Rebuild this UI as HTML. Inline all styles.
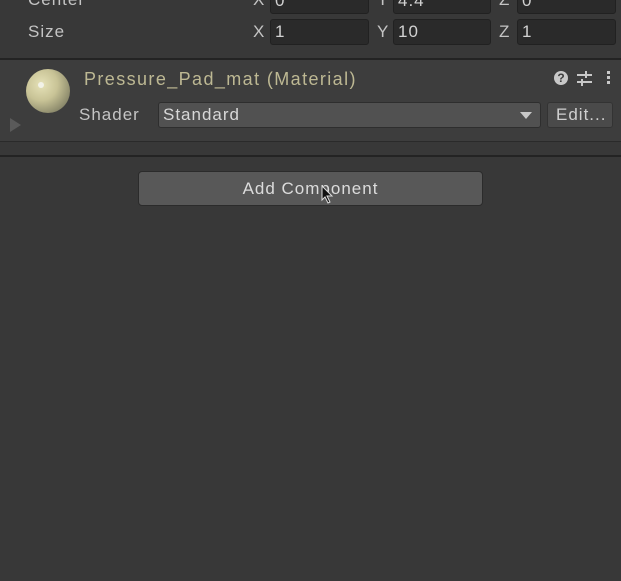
<!DOCTYPE html>
<html><head><style>
body{margin:0;width:621px;height:581px;background:#383838;overflow:hidden;position:relative;font-family:"Liberation Sans",sans-serif;color:#c4c4c4;font-size:17px;letter-spacing:1px}
.a{position:absolute}
.f{position:absolute;background:#2a2a2a;border:1px solid #212121;border-radius:3px;box-sizing:border-box;height:26px;line-height:24px;padding-left:4px;color:#d2d2d2}
.l{position:absolute;line-height:26px;color:#c4c4c4}
</style></head><body>
<div class="l" style="left:28px;top:-13px">Center</div>
<div class="l" style="left:253px;top:-13px">X</div><div class="f" style="left:270px;top:-12px;width:99px">0</div>
<div class="l" style="left:377px;top:-13px">Y</div><div class="f" style="left:393px;top:-12px;width:98px">4.4</div>
<div class="l" style="left:499px;top:-13px">Z</div><div class="f" style="left:517px;top:-12px;width:99px">0</div>
<div class="l" style="left:28px;top:19px">Size</div>
<div class="l" style="left:253px;top:19px">X</div><div class="f" style="left:270px;top:19px;width:99px">1</div>
<div class="l" style="left:377px;top:19px">Y</div><div class="f" style="left:393px;top:19px;width:98px">10</div>
<div class="l" style="left:499px;top:19px">Z</div><div class="f" style="left:517px;top:19px;width:99px">1</div>
<div class="a" style="left:0;top:58px;width:621px;height:2px;background:#232323"></div>
<div class="a" style="left:0;top:60px;width:621px;height:81px;background:#3d3d3d"></div>
<div class="a" style="left:0;top:141px;width:621px;height:1px;background:#2a2a2a"></div>
<div class="a" style="left:0;top:155px;width:621px;height:2px;background:#232323"></div>
<div class="a" style="left:26px;top:69px;width:44px;height:44px;border-radius:50%;background:radial-gradient(circle at 35% 35%,#e6e2b8 0,#c8c396 40%,#8c8a6c 75%,#5a5a4c 100%)"></div>
<div class="a" style="left:38px;top:82px;width:6px;height:6px;border-radius:50%;background:#f2f2e8"></div>
<div class="a" style="left:10px;top:118px;width:0;height:0;border-left:11px solid #5a5a5a;border-top:7px solid transparent;border-bottom:7px solid transparent"></div>
<div class="l" style="left:84px;top:66px;color:#bdb893;font-size:18px;letter-spacing:1.4px">Pressure_Pad_mat (Material)</div>
<div class="a" style="left:554px;top:71px;width:14px;height:14px;border-radius:50%;background:#c8c8c8;color:#3d3d3d;font-size:12px;font-weight:bold;text-align:center;line-height:14px;letter-spacing:0">?</div>
<div class="a" style="left:577px;top:74px;width:15px;height:2px;background:#c8c8c8"></div>
<div class="a" style="left:577px;top:81px;width:15px;height:2px;background:#c8c8c8"></div>
<div class="a" style="left:585px;top:71px;width:2px;height:7px;background:#c8c8c8"></div>
<div class="a" style="left:581px;top:79px;width:2px;height:7px;background:#c8c8c8"></div>
<div class="a" style="left:607px;top:71px;width:3px;height:3px;background:#c8c8c8;box-shadow:0 5px 0 #c8c8c8,0 10px 0 #c8c8c8"></div>
<div class="l" style="left:79px;top:102px">Shader</div>
<div class="f" style="left:158px;top:102px;width:383px;background:#515151;border-color:#2e2e2e;color:#d8d8d8">Standard</div>
<div class="a" style="left:520px;top:112px;border-top:7px solid #c8c8c8;border-left:6px solid transparent;border-right:6px solid transparent"></div>
<div class="f" style="left:547px;top:102px;width:66px;background:#4a4a4a;border-color:#333;color:#d0d0d0;padding-left:8px">Edit...</div>
<div class="a" style="left:138px;top:171px;width:345px;height:35px;background:#585858;border:1px solid #2b2b2b;border-radius:4px;box-sizing:border-box;text-align:center;line-height:33px;color:#dcdcdc">Add Component</div>
<svg class="a" style="left:321px;top:185px" width="14" height="20"><path d="M1 1 L1 15 L4 12 L7 18 L9 17 L6 11 L11 11 Z" fill="#111" stroke="#ddd" stroke-width="1"/></svg>
</body></html>
